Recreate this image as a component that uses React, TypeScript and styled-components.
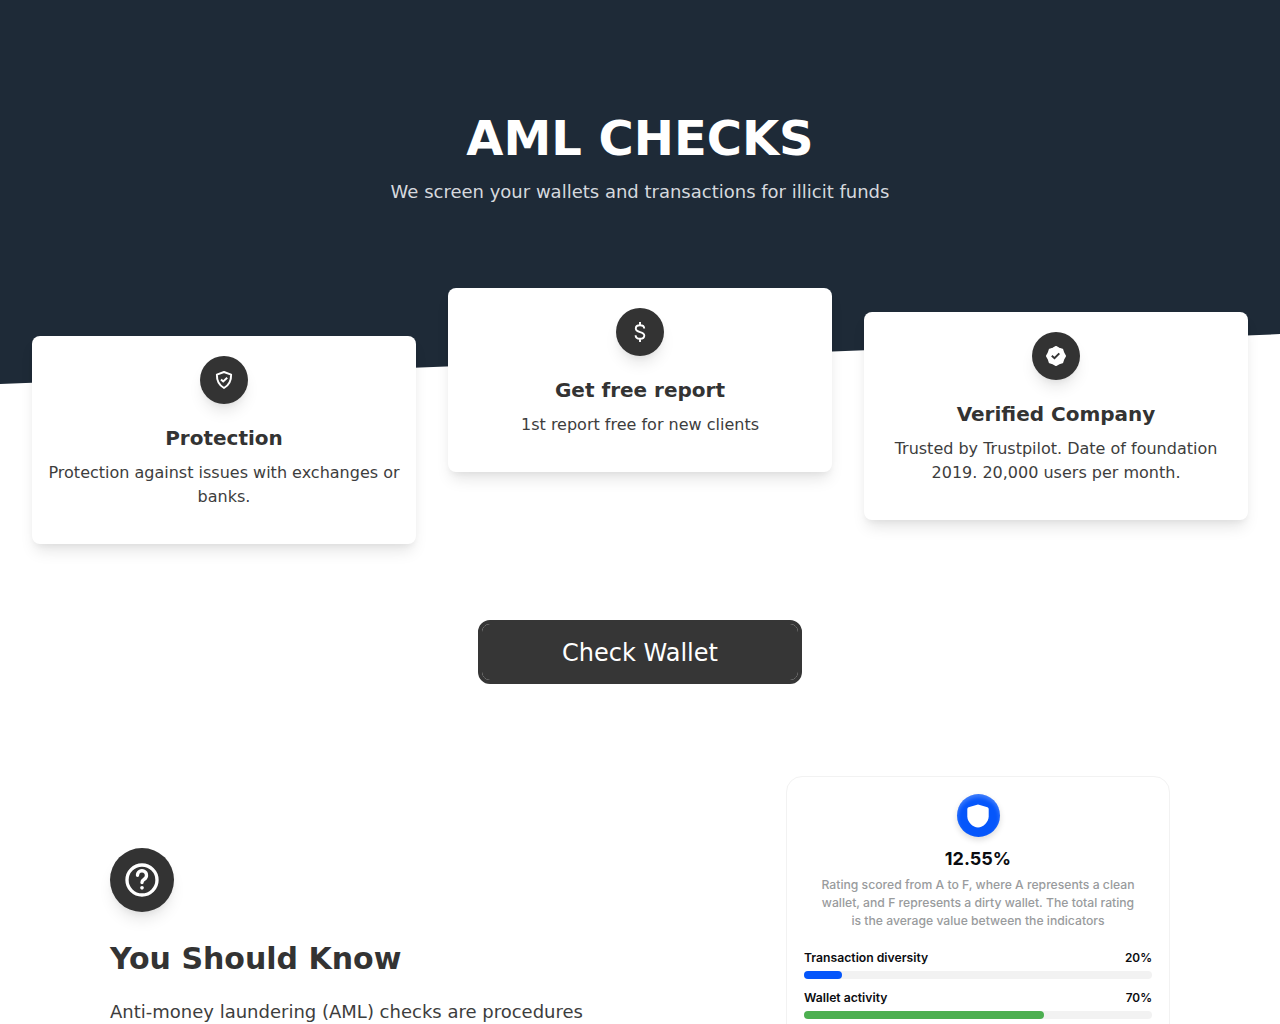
import { ReactNode } from "react";
import styled, { createGlobalStyle } from "styled-components";

const GlobalStyle = createGlobalStyle`
  * {
    box-sizing: border-box;
  }
  body {
    margin: 0;
    background: #fff;
    color: #333;
    font-family: "DejaVu Sans", sans-serif;
    font-size: 16px;
    line-height: 24px;
  }
  h1, h2, h3, p {
    margin: 0;
  }
`;

const Page = styled.main`
  height: 1024px;
  overflow: hidden;
`;

const Hero = styled.header`
  height: 384px;
  padding-top: 108px;
  background: #1e2a37;
  clip-path: polygon(0 0, 100% 0, 100% 87%, 0 100%);
  text-align: center;
`;

const HeroTitle = styled.h1`
  color: #fff;
  font-size: 48px;
  line-height: 60px;
  font-weight: 700;
`;

const HeroText = styled.p`
  margin-top: 10px;
  color: #d6d9de;
  font-size: 18px;
  line-height: 28px;
`;

const Cards = styled.section`
  display: grid;
  grid-template-columns: repeat(3, 1fr);
  align-items: start;
  gap: 32px;
  height: 332px;
  margin-top: -96px;
  padding: 0 32px;
`;

const Card = styled.article<{ $offset: number }>`
  position: relative;
  display: flex;
  flex-direction: column;
  align-items: center;
  margin-top: ${(p) => p.$offset}px;
  padding: 20px 16px 35px;
  border-radius: 8px;
  background: #fff;
  text-align: center;
  box-shadow: 0 10px 15px -3px rgba(0, 0, 0, 0.1), 0 4px 6px -2px rgba(0, 0, 0, 0.05);
`;

const IconCircle = styled.div<{ $size: number }>`
  display: flex;
  align-items: center;
  justify-content: center;
  width: ${(p) => p.$size}px;
  height: ${(p) => p.$size}px;
  border-radius: 50%;
  background: #333;
  color: #fff;
  box-shadow: 0 10px 15px -3px rgba(0, 0, 0, 0.1), 0 4px 6px -2px rgba(0, 0, 0, 0.05);
`;

const CardTitle = styled.h3`
  margin: 20px 0 9px;
  font-size: 20px;
  line-height: 28px;
  font-weight: 600;
`;

const CardText = styled.p`
  color: #3d3d3d;
`;

const CheckButton = styled.button`
  display: block;
  width: 324px;
  height: 64px;
  margin: 0 auto;
  padding: 0;
  border: 4px solid #363636;
  border-radius: 12px;
  background: #fff;
  color: #fff;
  font: inherit;
  font-size: 24px;
`;

const ButtonFace = styled.span`
  display: flex;
  align-items: center;
  justify-content: center;
  height: 56px;
  padding-top: 2px;
  border-radius: 8px;
  background: #363636;
`;

const Info = styled.section`
  display: flex;
  justify-content: space-between;
  align-items: flex-start;
  padding: 92px 110px 0;
`;

const InfoText = styled.div`
  width: 500px;
  padding-top: 72px;
`;

const InfoTitle = styled.h2`
  margin: 27px 0 19px;
  font-size: 30px;
  line-height: 40px;
  font-weight: 600;
`;

const InfoParagraph = styled.p`
  color: #3d3d3d;
  font-size: 18px;
  line-height: 28px;
`;

const Report = styled.aside`
  display: flex;
  flex-direction: column;
  align-items: center;
  width: 384px;
  height: 420px;
  padding: 17px 17px 0;
  border: 1px solid #f2f2f2;
  border-radius: 16px;
  color: #0b0c10;
  font-family: Inter, sans-serif;
`;

const ScoreBadge = styled.div`
  display: flex;
  align-items: center;
  justify-content: center;
  width: 43px;
  height: 43px;
  border-radius: 50%;
  background: #0556fb;
  box-shadow: 0 3px 6px rgba(0, 0, 0, 0.14), inset 0 3px 4px rgba(255, 255, 255, 0.25);
`;

const Score = styled.div`
  margin-top: 10px;
  font-size: 18px;
  line-height: 24px;
  font-weight: 650;
`;

const ScoreText = styled.p`
  width: 330px;
  margin: 5px 0 19px;
  color: #999b9d;
  font-size: 12.2px;
  font-weight: 500;
  line-height: 18.2px;
  text-align: center;
`;

const Metric = styled.div`
  width: 348px;
  height: 40px;
`;

const MetricHead = styled.div`
  display: flex;
  justify-content: space-between;
  font-size: 12.2px;
  line-height: 16px;
  font-weight: 600;
`;

const MetricValue = styled.span`
  font-size: 11.8px;
`;

const Track = styled.div`
  height: 8px;
  margin-top: 5px;
  border-radius: 4px;
  background: #f2f2f2;
`;

const Fill = styled.div<{ $color: string }>`
  height: 100%;
  border-radius: 4px;
  background: ${(p) => p.$color};
`;

const ShieldIcon = () => (
  <svg width="24" height="24" viewBox="0 0 24 24" fill="none" stroke="currentColor" strokeWidth="2">
    <path d="M12 4 19.1 6.6C19.3 12.6 17.2 17 12 20 6.8 17 4.700 12.6 4.900 6.6z" strokeLinejoin="round" />
    <path d="m9 11.5 2.2 2 4-3.7" />
  </svg>
);

const DollarIcon = () => (
  <svg width="24" height="24" viewBox="0 0 24 24" fill="none" stroke="currentColor" strokeWidth="1.9">
    <path d="M12 2v3.5M12 18.5V22M16.2 8.6C16.2 6.7 14.5 5.3 12 5.3S7.8 6.7 7.8 8.5c0 4.6 8.5 2.5 8.5 7 0 2-1.7 3.3-4.3 3.3s-4.4-1.4-4.4-3.5" />
  </svg>
);

const BadgeIcon = () => (
  <svg width="24" height="24" viewBox="0 0 24 24" fill="none">
    <path
      fill="currentColor"
      stroke="currentColor"
      strokeWidth="1.6"
      strokeLinejoin="round"
      d="M12 2.8 15.1 4.5 18.4 5.6 19.5 8.9 21.2 12 19.5 15.1 18.4 18.4 15.1 19.5 12 21.2 8.9 19.5 5.6 18.4 4.5 15.1 2.8 12 4.5 8.9 5.6 5.6 8.9 4.5z"
    />
    <path d="m7.8 11.8 2.7 2.4 4.8-4.8" stroke="#333" strokeWidth="2" />
  </svg>
);

const HelpIcon = () => (
  <svg width="40" height="40" viewBox="0 0 24 24" fill="none" stroke="currentColor" strokeWidth="2">
    <circle cx="12" cy="12" r="9" />
    <path d="M9.3 9.200a2.700 2.700 0 1 1 4.200 2.200c-.9.6-1.500 1-1.500 2.100" strokeLinecap="round" />
    <circle cx="12" cy="16.7" r="1.1" fill="currentColor" stroke="none" />
  </svg>
);

interface CardItem {
  title: string;
  text: string;
  offset: number;
  icon: ReactNode;
}

const cards: CardItem[] = [
  {
    title: "Protection",
    text: "Protection against issues with exchanges or banks.",
    offset: 48,
    icon: <ShieldIcon />,
  },
  {
    title: "Get free report",
    text: "1st report free for new clients",
    offset: 0,
    icon: <DollarIcon />,
  },
  {
    title: "Verified Company",
    text: "Trusted by Trustpilot. Date of foundation 2019. 20,000 users per month.",
    offset: 24,
    icon: <BadgeIcon />,
  },
];

const metrics = [
  { label: "Transaction diversity", value: "20%", fill: 11, color: "#0556fb" },
  { label: "Wallet activity", value: "70%", fill: 69, color: "#4caf50" },
];

const App = () => {
  return (
    <Page>
      <GlobalStyle />
      <Hero>
        <HeroTitle>AML CHECKS</HeroTitle>
        <HeroText>We screen your wallets and transactions for illicit funds</HeroText>
      </Hero>
      <Cards>
        {cards.map((card) => (
          <Card key={card.title} $offset={card.offset}>
            <IconCircle $size={48}>{card.icon}</IconCircle>
            <CardTitle>{card.title}</CardTitle>
            <CardText>{card.text}</CardText>
          </Card>
        ))}
      </Cards>
      <CheckButton>
        <ButtonFace>Check Wallet</ButtonFace>
      </CheckButton>
      <Info>
        <InfoText>
          <IconCircle $size={64}>
            <HelpIcon />
          </IconCircle>
          <InfoTitle>You Should Know</InfoTitle>
          <InfoParagraph>Anti-money laundering (AML) checks are procedures</InfoParagraph>
        </InfoText>
        <Report>
          <ScoreBadge>
            <svg width="24" height="26" viewBox="0 0 24 26" fill="#fff">
              <path d="M12 1.500 21.500 4.300Q22.700 4.700 22.700 6v7.500c0 5.300-5.500 11-10.700 11S1.300 18.800 1.300 13.500V6Q1.300 4.700 2.500 4.300z" />
            </svg>
          </ScoreBadge>
          <Score>12.55%</Score>
          <ScoreText>
            Rating scored from A to F, where A represents a clean
            <br />
            wallet, and F represents a dirty wallet. The total rating
            <br />
            is the average value between the indicators
          </ScoreText>
          {metrics.map((m) => (
            <Metric key={m.label}>
              <MetricHead>
                <span>{m.label}</span>
                <MetricValue>{m.value}</MetricValue>
              </MetricHead>
              <Track>
                <Fill $color={m.color} style={{ width: `${m.fill}%` }} />
              </Track>
            </Metric>
          ))}
        </Report>
      </Info>
    </Page>
  );
};

export default App;
